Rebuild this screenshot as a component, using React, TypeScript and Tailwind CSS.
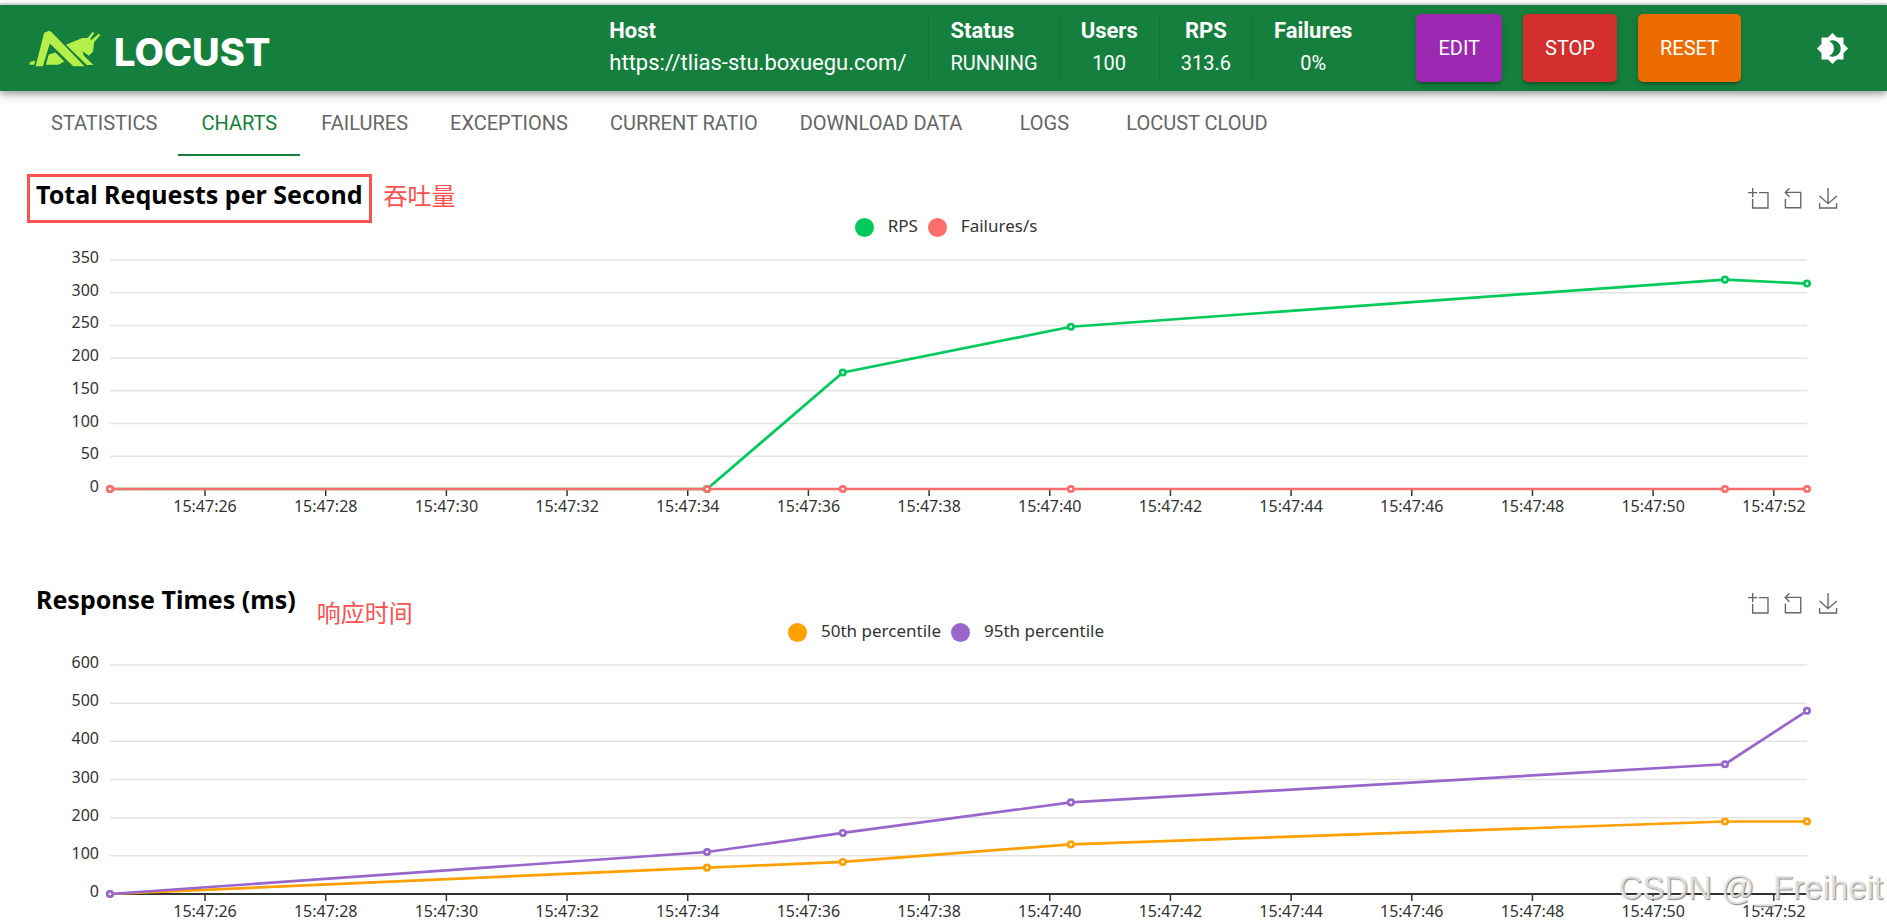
import React from 'react';
import clsx from 'clsx';
import { MdBrightness4 } from 'react-icons/md';

type Series = { name: string; color: string; values: number[] };

type Chart = {
	title: string;
	note: string;
	titleClass: string;
	noteClass: string;
	max: number;
	step: number;
	series: Series[];
};

const TABS = [
	'STATISTICS',
	'CHARTS',
	'FAILURES',
	'EXCEPTIONS',
	'CURRENT RATIO',
	'DOWNLOAD DATA',
	'LOGS',
	'LOCUST CLOUD',
];

const STATS = [
	{ label: 'Status', value: 'RUNNING', className: 'text-left' },
	{ label: 'Users', value: '100' },
	{ label: 'RPS', value: '313.6' },
	{ label: 'Failures', value: '0%' },
];

// seconds after 15:47:00
const START = 24.425;
const END = 52.55;
const SAMPLES = [24.425, 34.32, 36.57, 40.35, 51.19, 52.55];
const TICKS = [26, 28, 30, 32, 34, 36, 38, 40, 42, 44, 46, 48, 50, 52];

const CHARTS: Chart[] = [
	{
		title: 'Total Requests per Second',
		note: '吞吐量',
		titleClass: 'border-[#fa5252]',
		noteClass: 'mt-[3px]',
		max: 350,
		step: 50,
		series: [
			{ name: 'RPS', color: '#00ca5a', values: [0, 0, 178, 248, 320, 314] },
			{ name: 'Failures/s', color: '#ff6d6d', values: [0, 0, 0, 0, 0, 0] },
		],
	},
	{
		title: 'Response Times (ms)',
		note: '响应时间',
		titleClass: 'border-transparent',
		noteClass: 'mt-[15px]',
		max: 600,
		step: 100,
		series: [
			{ name: '50th percentile', color: '#ff9f00', values: [0, 69, 84, 130, 190, 190] },
			{ name: '95th percentile', color: '#9966cc', values: [0, 110, 160, 240, 340, 480] },
		],
	},
];

const PLOT_TOP = 22;
const PLOT_HEIGHT = 229;
const PLOT_BOTTOM = PLOT_TOP + PLOT_HEIGHT;

const toX = (t: number) => `${((t - START) / (END - START)) * 100}%`;

const Logo = () => (
	<div className="flex items-center gap-[13px]">
		<svg viewBox="86 90 216 112" className="w-[72px] h-[37px]" fill="#b5f04a">
			<path d="M87 188L104 182L101 195L87 195Z" />
			<path d="M131 98L146 92L153 96L253 200H219L148 131L127 200H105Z" />
			<path d="M145 164L165 158L192 185L174 195H136Z" />
			<path d="M197 135L246 114L262 114L278 96L283 99L270 117L274 120L296 101L301 105L282 127L279 155L266 168L247 154L251 168L280 196H260Z" />
		</svg>
		<span className="font-['Inter',sans-serif] font-extrabold text-[38px] leading-10 pt-2">LOCUST</span>
	</div>
);

const ToolIcon = ({ label, viewBox, d }: { label: string; viewBox: string; d: string }) => (
	<button type="button" aria-label={label}>
		<svg viewBox={viewBox} className="size-5 overflow-visible" fill="none" stroke="#666666" strokeWidth="4">
			<path d={d} />
		</svg>
	</button>
);

const Toolbox = () => (
	<div className="flex items-start gap-[15px] mt-[14px] mr-[27px]">
		<ToolIcon
			label="Zoom"
			viewBox="0 0 58 58"
			d="M0,13.5h26.9 M13.5,26.9V0 M32.1,13.5H58V58H13.5 V32.1"
		/>
		<ToolIcon
			label="Restore zoom"
			viewBox="3.4 0.75 58 58"
			d="M22,1.4L9.9,13.5l12.3,12.3 M10.3,13.5H54.9v44.6 H10.3v-26"
		/>
		<ToolIcon
			label="Save as image"
			viewBox="0 0 58 58"
			d="M4.7,22.9L29.3,45.5L54.7,23.4M4.6,43.6L4.6,58L53.8,58L53.8,43.6M29.2,45.1L29.2,0"
		/>
	</div>
);

const Plot = ({ chart }: { chart: Chart }) => {
	const toY = (v: number) => PLOT_BOTTOM - (v / chart.max) * PLOT_HEIGHT;
	const levels = Array.from({ length: chart.max / chart.step + 1 }, (_, i) => i * chart.step);

	return (
		<div className="pl-[110px] pr-20">
			<svg className="block w-full h-[278px] overflow-visible font-['Noto_Sans',sans-serif] text-base">
				{levels.map((v) => (
					<React.Fragment key={v}>
						<line
							x1="0"
							x2="100%"
							y1={toY(v)}
							y2={toY(v)}
							stroke={v === 0 ? '#333333' : '#e3e3e3'}
							strokeWidth={v === 0 ? 2 : 1.5}
						/>
						<text x="-11" y={toY(v) + 3} textAnchor="end" fill="#333333">
							{v}
						</text>
					</React.Fragment>
				))}
				{TICKS.map((t) => (
					<React.Fragment key={t}>
						<line x1={toX(t)} x2={toX(t)} y1={PLOT_BOTTOM} y2={PLOT_BOTTOM + 7} stroke="#333333" strokeWidth="1.5" />
						<text x={toX(t)} y={PLOT_BOTTOM + 23} textAnchor="middle" fill="#333333">
							{`15:47:${t}`}
						</text>
					</React.Fragment>
				))}
				{chart.series.map((s) => (
					<g key={s.name} stroke={s.color}>
						{s.values.slice(1).map((v, i) => (
							<line
								key={i}
								x1={toX(SAMPLES[i])}
								y1={toY(s.values[i])}
								x2={toX(SAMPLES[i + 1])}
								y2={toY(v)}
								strokeWidth="2.7"
							/>
						))}
						{s.values.map((v, i) => (
							<circle key={i} cx={toX(SAMPLES[i])} cy={toY(v)} r="2.7" fill="#ffffff" strokeWidth="2.7" />
						))}
					</g>
				))}
			</svg>
		</div>
	);
};

const ChartPanel = ({ chart }: { chart: Chart }) => (
	<section className="pt-[18px] pb-[45px] last:pb-0">
		<div className="grid grid-cols-[1fr_auto_1fr] h-16 pl-[27px] pr-[22px]">
			<div className="flex items-start gap-3">
				<h2
					className={clsx(
						"h-[49px] border-3 px-[6px] font-['Noto_Sans',sans-serif] font-bold text-[25px] leading-[34px] text-black whitespace-nowrap",
						chart.titleClass,
					)}
				>
					{chart.title}
				</h2>
				<span
					className={clsx(
						"font-['Noto_Sans_CJK_SC',sans-serif] text-2xl leading-9 text-[#ff4f4f] whitespace-nowrap",
						chart.noteClass,
					)}
				>
					{chart.note}
				</span>
			</div>
			<ul className="flex self-end gap-[10px]">
				{chart.series.map((s) => (
					<li key={s.name} className="flex items-center gap-[14px]">
						<span className="size-[19px] rounded-full" style={{ backgroundColor: s.color }} />
						<span className="font-['Noto_Sans',sans-serif] text-[17px] leading-5 pb-[2px] text-[#333333]">{s.name}</span>
					</li>
				))}
			</ul>
			<div className="flex justify-end">
				<Toolbox />
			</div>
		</div>
		<Plot chart={chart} />
	</section>
);

const Header = () => (
	<header className="flex items-center h-[86px] pl-[29px] pr-[38px] bg-[#15803d] text-white shadow-[0_3px_5px_-1px_rgba(0,0,0,0.2),0_5px_7px_0_rgba(0,0,0,0.14),0_1px_14px_0_rgba(0,0,0,0.12)]">
		<Logo />
		<div className="flex items-center ml-auto">
			<dl className="flex text-center leading-8 divide-x divide-black/12">
				<div className="h-[68px] pt-px px-[22px] text-left text-[22px]">
					<dt className="font-bold">Host</dt>
					<dd>https://tlias-stu.boxuegu.com/</dd>
				</div>
				{STATS.map((s) => (
					<div key={s.label} className={clsx('h-[68px] pt-px px-[21px]', s.className)}>
						<dt className="font-bold text-[22px]">{s.label}</dt>
						<dd className="text-xl leading-8">{s.value}</dd>
					</div>
				))}
			</dl>
			<div className="flex gap-[21px] ml-[43px] text-xl">
				<HeaderButton className="bg-[#9c27b0]">EDIT</HeaderButton>
				<HeaderButton className="bg-[#d32f2f]">STOP</HeaderButton>
				<HeaderButton className="bg-[#ed6c02]">RESET</HeaderButton>
			</div>
			<button type="button" aria-label="Toggle theme" className="ml-[75px]">
				<MdBrightness4 className="size-[33px]" />
			</button>
		</div>
	</header>
);

const HeaderButton = ({ className, children }: { className: string; children: React.ReactNode }) => (
	<button
		type="button"
		className={clsx(
			'h-[68px] px-[22px] rounded-[5px] shadow-[0_4px_2px_-3px_rgba(0,0,0,0.2),0_3px_3px_0_rgba(0,0,0,0.14),0_1px_7px_0_rgba(0,0,0,0.12)]',
			className,
		)}
	>
		{children}
	</button>
);

const Tabs = () => (
	<nav role="tablist" className="flex h-[65px] pl-[30px] text-xl">
		{TABS.map((tab) => (
			<button
				key={tab}
				type="button"
				role="tab"
				aria-selected={tab === 'CHARTS'}
				className={clsx(
					'min-w-[122px] px-[21px] border-b-2',
					tab === 'CHARTS' ? 'border-[#15803d] text-[#15803d]' : 'border-transparent text-[#666666]',
				)}
			>
				{tab}
			</button>
		))}
	</nav>
);

export default function App() {
	return (
		<div className="relative bg-white font-['Roboto',sans-serif] overflow-hidden">
			<div className="h-[5px] border-b-2 border-[#dcdcdc]" />
			<Header />
			<Tabs />
			<main>
				{CHARTS.map((chart) => (
					<ChartPanel key={chart.title} chart={chart} />
				))}
			</main>
			<div className="absolute right-1 bottom-[13px] font-['Liberation_Sans',sans-serif] text-[33px] leading-10 text-[#e6e6e6]/90 [text-shadow:1px_1px_1px_#888888]">
				CSDN @_Freiheit
			</div>
		</div>
	);
}
